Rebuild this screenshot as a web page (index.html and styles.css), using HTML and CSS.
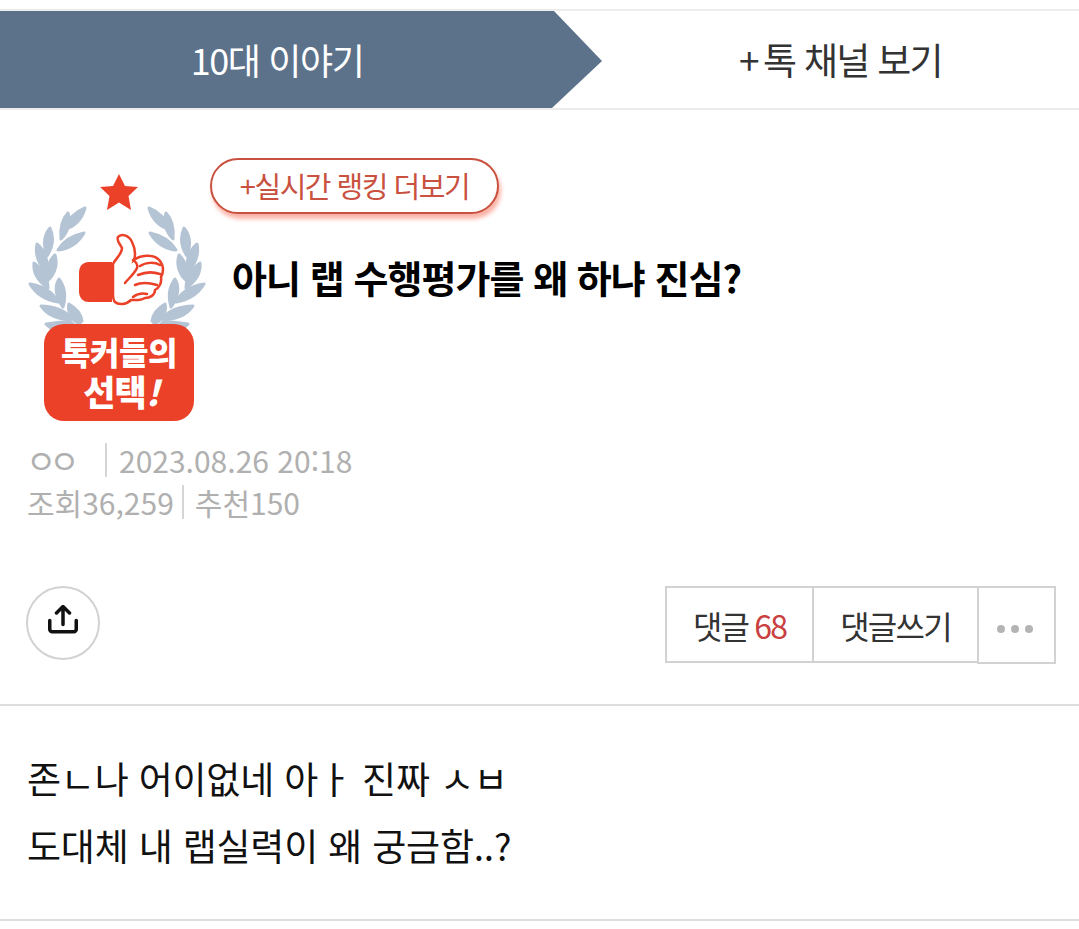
FILE: index.html
```html
<!DOCTYPE html>
<html lang="ko">
<head>
<meta charset="utf-8">
<title>10대 이야기</title>
<link rel="stylesheet" href="styles.css">
</head>
<body>
<nav class="tabs">
  <div class="tab-active"><span class="tab-active-label">10대 이야기</span></div>
  <div class="tab-other"><span class="plus">+</span>톡 채널 보기</div>
</nav>
<header class="post-head">
  <svg class="badge" viewBox="0 0 180 252" width="180" height="252" aria-label="톡커들의 선택!">
    <polygon class="red" points="91,2 97,14 110,15 100.500,24 103,38 91,30.500 79,38 81.500,24 72,15 85,14"/>
    <g class="leaf" transform="translate(0 27)">
      <g id="wreath">
        <path d="M57,9 C47,13 40,20 35,31 C46,28 54,20 57,9Z"/>
        <path d="M40,14 C34,20 32,29 33,40 C40,33 43,23 40,14Z"/>
        <path d="M56,34 C46,36 36,41 30,51 C42,50 50,44 56,34Z"/>
        <path d="M22,29 C16,36 15,46 19,57 C25,48 26,38 22,29Z"/>
        <path d="M9,45 C7,54 10,64 18,73 C21,63 17,52 9,45Z"/>
        <path d="M27,56 C20,62 18,73 19,82 C27,76 30,65 27,56Z"/>
        <path d="M6,64 C5,74 11,83 20,89 C20,79 14,70 6,64Z"/>
        <path d="M2,85 C8,95 17,101 30,103 C25,93 14,87 2,85Z"/>
        <path d="M31,80 C26,88 28,99 35,108 C38,98 37,88 31,80Z"/>
        <path d="M13,107 C20,117 31,121 44,120 C38,112 26,107 13,107Z"/>
        <path d="M41,105 C39,112 43,120 51,125 L54,122 C53,115 48,109 41,105Z"/>
        <path d="M18,125 L42,122 L50,130 L24,130Z"/>
      </g>
      <use href="#wreath" transform="matrix(-1 0 0 1 178 0)"/>
    </g>
    <path class="red" d="M61,90 H84 V130 H61 C54,130 51,125 51,119 V101 C51,95 54,90 61,90Z"/>
    <path class="thumb" d="M85,92 C88,86 94,82 94,76 C92,72 88,68 90,65 C93,61 101,63 104,70 C107,76 108,82 106,88 C112,83 125,82 130,87 C136,92 136,100 133,105 C134,111 131,116 127,118 C127,123 122,126 117,126 C112,129 106,128 103,128 C98,133 90,133 87,130 C85,128 85,125 85,122Z"/>
    <path class="thumb-line" d="M105,88 C108,90 110,93 109,96 C107,101 101,106 97,111 M112,94 C118,90 127,90 132,93 M110,103 C117,100 126,100 132,102 M107,113 C114,110 122,111 129,113 M105,125 C109,122 114,121 119,122"/>
    <rect class="red" x="16" y="152" width="150" height="97" rx="20"/>
    <text class="badge-text" text-anchor="middle"><tspan x="91" y="193">톡커들의</tspan><tspan class="badge-line-2" x="93" y="234">선택<tspan class="bang">!</tspan></tspan></text>
  </svg>
  <div class="head-main">
    <a class="more-pill">+실시간 랭킹 더보기</a>
    <h1 class="title">아니 랩 수행평가를 왜 하냐 진심?</h1>
  </div>
</header>
<section class="meta">
  <div class="meta-row"><span class="author">ㅇㅇ</span><span class="sep sep-a"></span><span>2023.08.26 20:18</span></div>
  <div class="meta-row"><span>조회36,259</span><span class="sep sep-b"></span><span>추천150</span></div>
</section>
<section class="actions">
  <button class="share" aria-label="공유">
    <svg viewBox="0 0 36 36" width="36" height="36"><path d="M18 19.500V2M11.500 8 18 1.500 24.500 8M4.750 15.500v8.750a2.500 2.500 0 0 0 2.500 2.500h21.500a2.500 2.500 0 0 0 2.500-2.500V15.500"/></svg>
  </button>
  <div class="btn-group">
    <a class="btn btn-comments">댓글<em class="count">68</em></a>
    <a class="btn btn-write">댓글쓰기</a>
    <a class="btn btn-more"><i class="dot"></i><i class="dot"></i><i class="dot"></i></a>
  </div>
</section>
<article class="content">
  <p>존ㄴ나 어이없네 아ㅏ 진짜 ㅅㅂ</p>
  <p>도대체 내 랩실력이 왜 궁금함..?</p>
</article>
</body>
</html>
```
FILE: styles.css
```css
* { box-sizing: border-box; }
html, body { margin: 0; padding: 0; background: #fff; }
body {
  width: 1079px;
  height: 929px;
  overflow: hidden;
  padding-top: 9px;
  font-family: "Noto Sans CJK KR", "Noto Sans", sans-serif;
  color: #111;
}
.tabs {
  display: flex;
  height: 101px;
  border-top: 2px solid #ececec;
  border-bottom: 2px solid #ececec;
}
.tab-active {
  width: 602px;
  background: #5c728b;
  clip-path: polygon(0 0, 554px 0, 602px 50px, 552px 100%, 0 100%);
  color: #fff;
  font-size: 36px;
  font-weight: 400;
  letter-spacing: -1.400px;
}
.tab-active-label {
  display: block;
  width: 554px;
  line-height: 97px;
  text-align: center;
}
.tab-other {
  flex: 1;
  text-align: center;
  line-height: 97px;
  font-size: 37px;
  font-weight: 400;
  letter-spacing: -1.700px;
  color: #333;
}
.plus { margin-right: 5px; }
.post-head {
  display: flex;
  padding: 48px 0 0 28px;
  height: 314px;
}
.badge { display: block; margin-top: 14px; flex: none; }
.red { fill: #ea4128; }
.leaf path { fill: #b4c4d4; stroke: #b4c4d4; stroke-width: 3; stroke-linejoin: round; }
.thumb { fill: #fff; stroke: #ea4128; stroke-width: 2.500; }
.thumb-line { fill: none; stroke: #ea4128; stroke-width: 2.500; stroke-linecap: round; }
.badge-text {
  fill: #fff;
  font-size: 32px;
  font-weight: 900;
  letter-spacing: -0.500px;
}
.badge-line-2 { font-size: 35px; letter-spacing: -1px; }
.bang { font-style: italic; }
.head-main { margin-left: 2px; flex: 1; }
.more-pill {
  display: block;
  width: 289px;
  height: 56px;
  line-height: 51px;
  text-align: center;
  border: 2px solid #c9513f;
  border-radius: 28px;
  background: #fff;
  color: #c9513f;
  font-size: 29px;
  font-weight: 400;
  letter-spacing: -1.500px;
  box-shadow: 2px 5px 4px #fbb3a8;
}
.title {
  margin: 38px 0 0 22px;
  font-size: 38px;
  line-height: 50px;
  font-weight: 700;
  letter-spacing: -0.950px;
  color: #000;
}
.meta { padding: 15px 0 0 27px; height: 162px; color: #b0b0b0; font-size: 30px; font-weight: 400; }
.meta-row { display: flex; align-items: center; height: 42px; }
.author { width: 79px; margin-left: -1px; font-size: 33px; letter-spacing: -7px; }
.sep { width: 2px; background: #d5d5d5; height: 34px; }
.sep-a { margin-right: 12px; }
.sep-b { margin: 0 11px 0 8px; }
.actions {
  display: flex;
  justify-content: space-between;
  align-items: flex-start;
  padding: 0 23px 0 26px;
  height: 120px;
  border-bottom: 2px solid #ddd;
}
.share {
  width: 74px;
  height: 74px;
  padding: 0;
  background: #fff;
  border: 2px solid #d2d2d2;
  border-radius: 50%;
  display: flex;
  align-items: center;
  justify-content: center;
}
.share svg { fill: none; stroke: #111; stroke-width: 3.500; stroke-linecap: round; stroke-linejoin: round; }
.btn-group { display: flex; align-items: flex-start; }
.btn {
  display: flex;
  align-items: center;
  justify-content: center;
  height: 77px;
  border: 2px solid #d2d2d2;
  font-size: 32px;
  font-weight: 400;
  letter-spacing: -1.800px;
  color: #333;
}
.btn-comments { width: 149px; }
.btn-write { width: 167px; margin-left: -2px; }
.btn-more { width: 79px; height: 78px; margin-left: -2px; gap: 6px; padding: 8px 4px 0 0; }
.count { font-style: normal; color: #c9403f; margin-left: 6px; }
.dot { width: 8px; height: 8px; border-radius: 50%; background: #b4b4b4; }
.content {
  padding: 39px 0 0 27px;
  height: 215px;
  border-bottom: 2px solid #ddd;
  font-size: 37px;
  font-weight: 400;
  letter-spacing: -0.200px;
  color: #111;
}
.content p { margin: 0; height: 67px; line-height: 67px; }
```
